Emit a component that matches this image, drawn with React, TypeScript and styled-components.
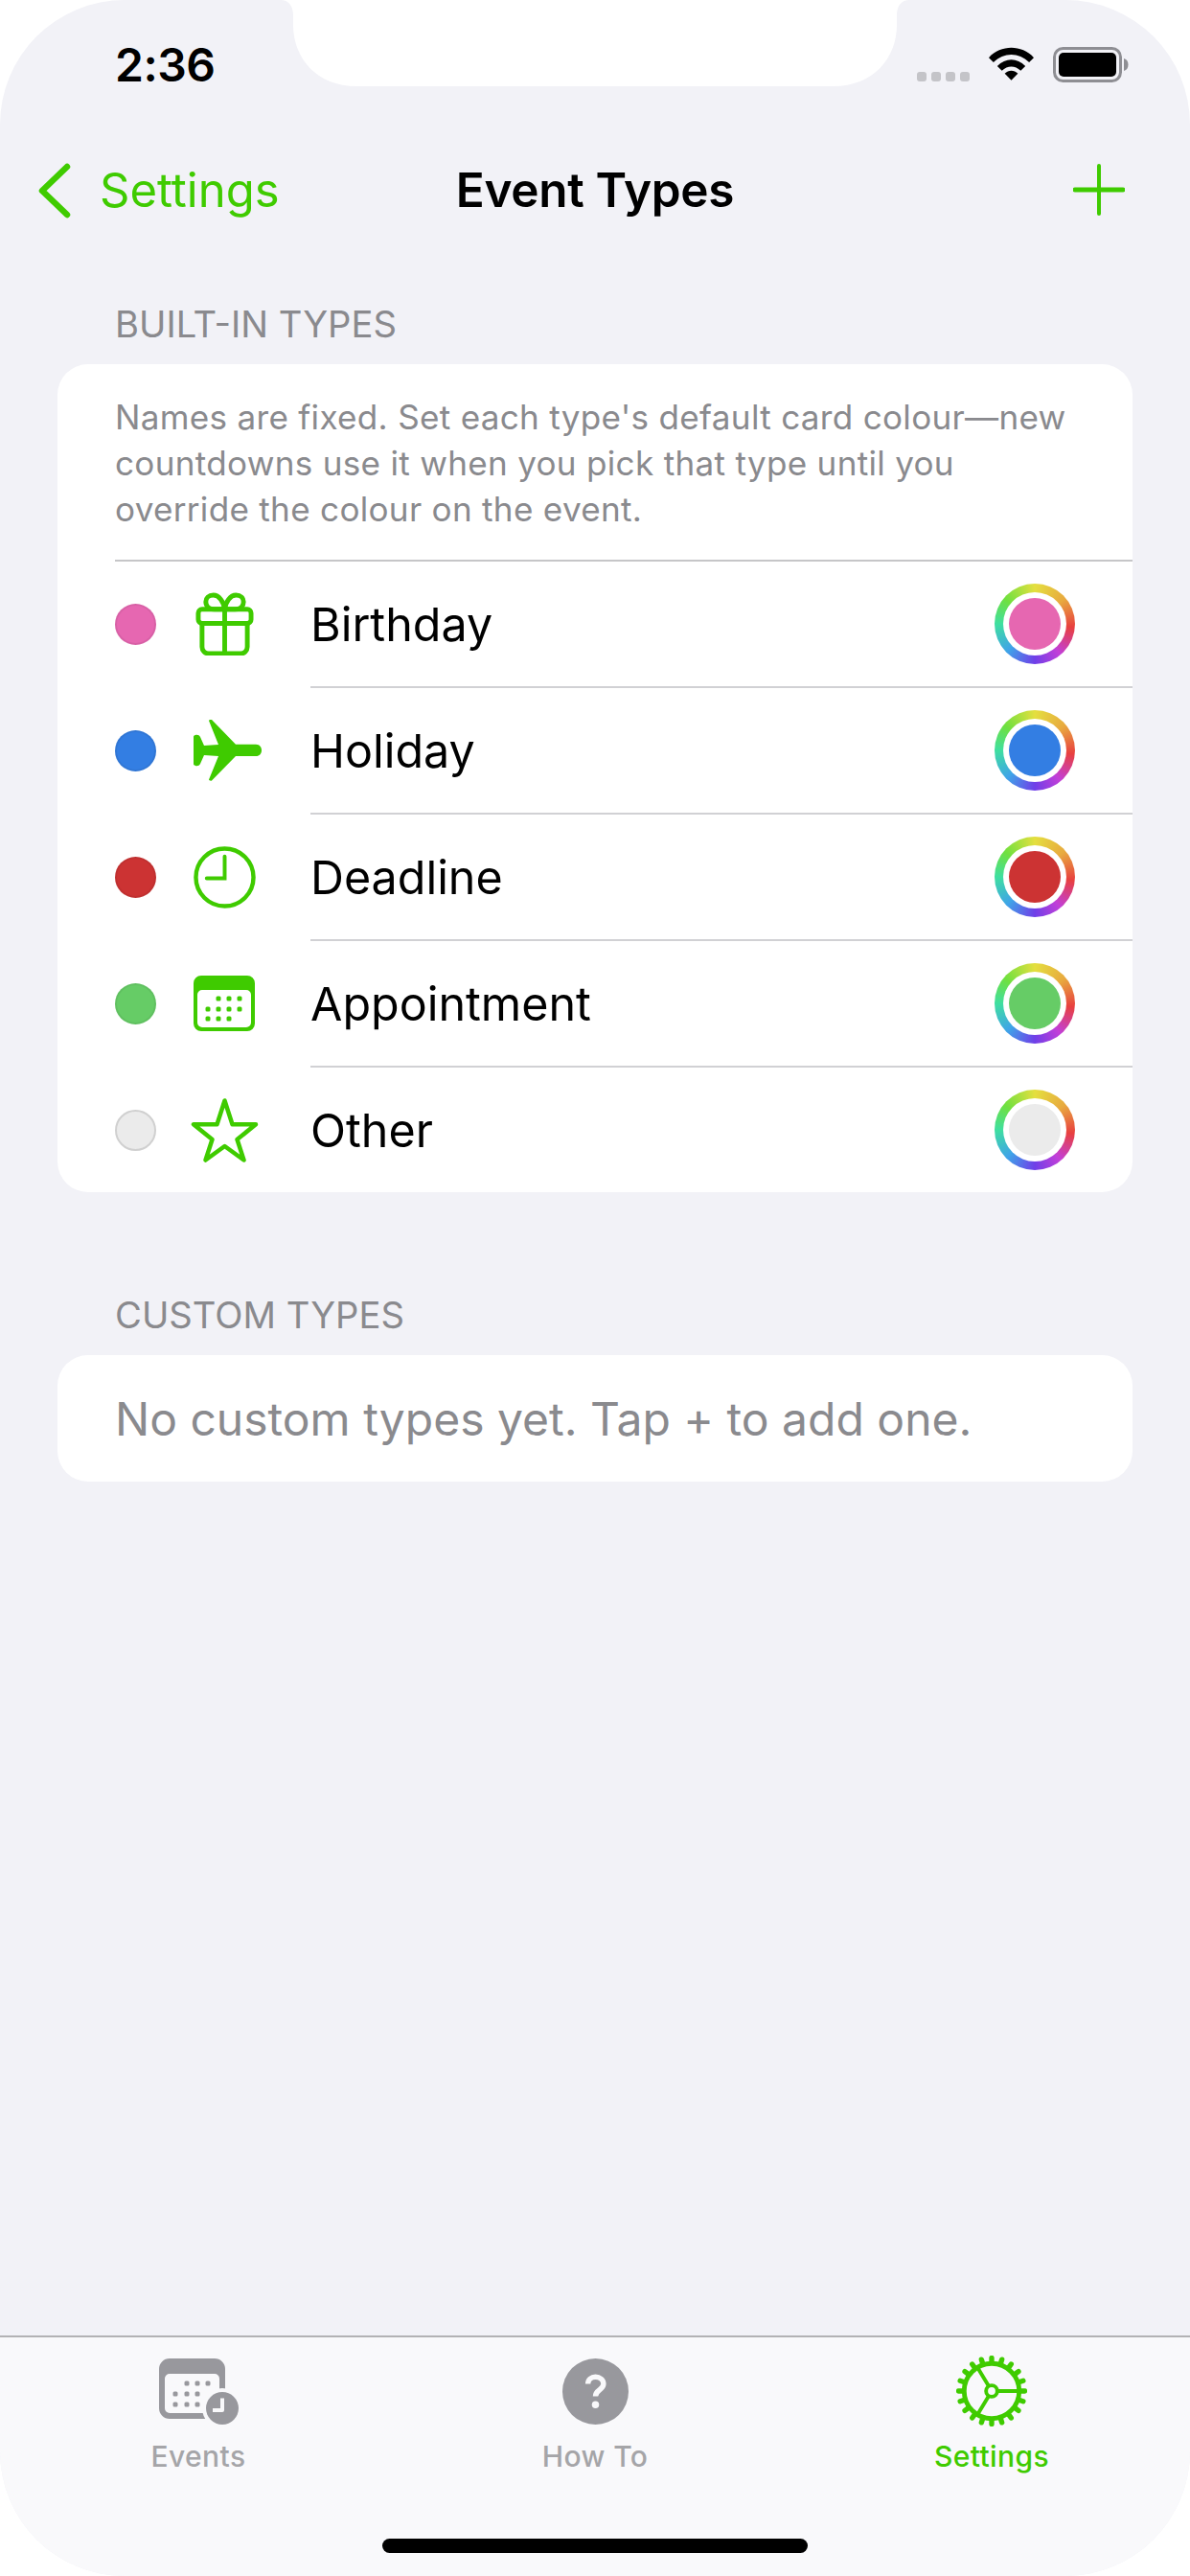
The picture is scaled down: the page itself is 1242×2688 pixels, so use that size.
import React from 'react';
import styled, {createGlobalStyle} from 'styled-components';

const GREEN = '#3fcb00';
const TAB_GREY = '#98989d';
const TAB_BG = '#f9f9fb';

const GlobalStyle = createGlobalStyle`
  html, body {
    margin: 0;
    padding: 0;
    background: #fff;
  }
  * {
    box-sizing: border-box;
  }
`;

const Screen = styled.div`
  position: relative;
  width: 1242px;
  height: 2688px;
  display: flex;
  flex-direction: column;
  background: #f2f2f7;
  border-radius: 130px;
  overflow: hidden;
  font-family: Inter, "Liberation Sans", sans-serif;
`;
const Notch = styled.svg`
  position: absolute;
  top: 0;
  left: 293px;
`;
const StatusBar = styled.div`
  height: 132px;
  padding: 36px 64px 0 120px;
  display: flex;
  justify-content: space-between;
`;
const Time = styled.div`
  font-size: 48px;
  font-weight: 600;
  line-height: 64px;
  letter-spacing: -0.5px;
  color: #000;
`;
const StatusIcons = styled.div`
  display: flex;
  align-items: flex-start;
  padding-top: 13px;
  gap: 20px;
`;
const SignalDots = styled.svg`
  margin-top: 26px;
`;
const NavBar = styled.div`
  position: relative;
  height: 132px;
  display: flex;
  align-items: center;
  justify-content: center;
`;
const BackLink = styled.div`
  position: absolute;
  left: 39px;
  top: 37px;
  display: flex;
  align-items: center;
  gap: 29px;
  color: ${GREEN};
  font-size: 49px;
`;
const AddButton = styled.svg`
  position: absolute;
  right: 68px;
  top: 39px;
`;
const Title = styled.div`
  font-size: 49.5px;
  font-weight: 600;
  color: #000;
  letter-spacing: -0.3px;
`;
const Content = styled.div`
  flex: 1;
  padding: 52px 60px 0;
`;
const SectionLabel = styled.div`
  padding-left: 60px;
  font-size: 38.2px;
  line-height: 44px;
  color: #8a8a8e;
  margin-bottom: 20px;
`;
const Card = styled.div`
  background: #fff;
  border-radius: 32px;
  overflow: hidden;
  margin-bottom: 106px;
`;
const Note = styled.div`
  margin-left: 60px;
  padding: 31px 0 29px;
  font-size: 35.1px;
  line-height: 48px;
  color: #8a8a8e;
  letter-spacing: 0.3px;
  border-bottom: 2px solid #c6c6c8;
`;
const Row = styled.div`
  height: 130px;
  display: flex;
  align-items: center;
  padding: 0 60px;
`;
const RowDivider = styled.div`
  height: 2px;
  margin-left: 264px;
  background: #d1d1d4;
`;
const Dot = styled.div<{$color: string; $light?: boolean}>`
  width: 43px;
  height: 43px;
  border-radius: 50%;
  background: ${props => props.$color};
  border: 2px solid ${props => props.$light ? '#d0d0d0' : 'rgba(0, 0, 0, 0.06)'};
  flex-shrink: 0;
`;
const IconSlot = styled.div`
  width: 161px;
  padding-right: 19px;
  display: flex;
  justify-content: center;
  flex-shrink: 0;
`;
const PlaneSvg = styled.svg`
  margin-left: 7px;
`;
const RowLabel = styled.div`
  flex: 1;
  font-size: 48.4px;
  color: #000;
`;
const Swatch = styled.div`
  width: 84px;
  height: 84px;
  border-radius: 50%;
  background: conic-gradient(#e4df3f 0deg, #e8a93f 50deg, #e8403f 95deg, #c23fd8 140deg, #6f3fe8 180deg, #3fa4e8 225deg, #3fdfa0 270deg, #6fe03f 310deg, #b4e03f 340deg, #e4df3f 360deg);
  display: flex;
  align-items: center;
  justify-content: center;
`;
const SwatchGap = styled.div`
  width: 66px;
  height: 66px;
  border-radius: 50%;
  background: #fff;
  display: flex;
  align-items: center;
  justify-content: center;
`;
const SwatchFill = styled.div<{$color: string}>`
  width: 54px;
  height: 54px;
  border-radius: 50%;
  background: ${props => props.$color};
`;
const EmptyRow = styled.div`
  height: 132px;
  padding-left: 60px;
  display: flex;
  align-items: center;
  font-size: 48px;
  color: #8a8a8e;
`;
const TabBar = styled.div`
  height: 251px;
  background: ${TAB_BG};
  border-top: 2px solid #b2b2b4;
  display: flex;
  justify-content: space-between;
  padding-top: 14px;
  position: relative;
`;
const Tab = styled.div`
  width: 414px;
  display: flex;
  flex-direction: column;
  align-items: center;
`;
const TabIcon = styled.div`
  height: 84px;
  display: flex;
  align-items: center;
  justify-content: center;
`;
const TabLabel = styled.div<{$active?: boolean}>`
  margin-top: 8px;
  font-size: 30px;
  font-weight: 500;
  line-height: 36px;
  letter-spacing: 0.4px;
  color: ${props => props.$active ? GREEN : '#a5a5a8'};
`;
const HomeIndicator = styled.div`
  position: absolute;
  left: 399px;
  bottom: 24px;
  width: 444px;
  height: 15px;
  border-radius: 8px;
  background: #000;
`;

const GiftIcon = () => (
	<svg width="61" height="66" viewBox="0 0 62 67" fill="none" stroke={GREEN} strokeWidth="5" strokeLinejoin="round">
		<rect x="3" y="18" width="56" height="15" rx="4"/>
		<path d="M7 33v25a7 7 0 0 0 7 7h34a7 7 0 0 0 7-7V33"/>
		<path d="M31 18v47"/>
		<path d="M31 18c-1-8-6-15-12-15-5 0-8 3-8 7 0 5 4 8 9 8h11z"/>
		<path d="M31 18c1-8 6-15 12-15 5 0 8 3 8 7 0 5-4 8-9 8H31z"/>
	</svg>
);

const PlaneIcon = () => (
	<PlaneSvg width="71" height="64" viewBox="0 0 71 64" fill={GREEN}>
		<path d="M16 1c0-1 2-1.500 3-1l25 25.700h21c4 0 6 3 6 6.300s-2 6-6 6H44L19 63.500c-1 .5-3 0-3-1L26 38l-15-1-4 9c-1 2-3 2.500-5 2-1.500-.5-2-1-2-2V18c0-1 .5-2 2-2 2-.5 4 0 5 2l4 9 15-1z"/>
	</PlaneSvg>
);

const ClockIcon = () => (
	<svg width="65" height="65" viewBox="0 0 66 66" fill="none" stroke={GREEN} strokeWidth="4.500">
		<circle cx="33" cy="33" r="30.500"/>
		<path d="M33 11v23H14" strokeLinecap="round" strokeWidth="4"/>
	</svg>
);

const calendarDots = [[26, 24], [37, 24], [48, 24], [15, 35], [26, 35], [37, 35], [48, 35], [15, 45], [26, 45], [37, 45]];

const CalendarIcon = () => (
	<svg width="64" height="58" viewBox="0 0 64 58">
		<path fillRule="evenodd" fill={GREEN} d="M8 0h48a8 8 0 0 1 8 8v42a8 8 0 0 1-8 8H8a8 8 0 0 1-8-8V8a8 8 0 0 1 8-8zM9 15a5 5 0 0 0-5 5v29a5 5 0 0 0 5 5h46a5 5 0 0 0 5-5V20a5 5 0 0 0-5-5z"/>
		<g fill={GREEN}>
			{calendarDots.map(([x, y]) => (
				<rect key={`${x}-${y}`} x={x - 2.5} y={y - 2.5} width="5" height="5" rx="1.5"/>
			))}
		</g>
	</svg>
);

const StarIcon = () => (
	<svg width="71" height="67" viewBox="0 0 71 67" fill="none" stroke={GREEN} strokeWidth="4.500" strokeLinejoin="round">
		<path d="M35.500 2.500l8 24.700H68L48.500 43l7 21.500L35.500 50l-20 14.500 7-21.500L3 27.200h24.500z"/>
	</svg>
);

const eventsDots = [[29, 26], [40, 26], [51, 26], [17, 37], [29, 37], [40, 37], [17, 48], [29, 48], [40, 48]];

const EventsTabIcon = () => (
	<svg width="83" height="69" viewBox="0 0 83 69">
		<path fill={TAB_GREY} fillRule="evenodd" d="M11 0h47a11 11 0 0 1 11 11v41a11 11 0 0 1-11 11H11A11 11 0 0 1 0 52V11A11 11 0 0 1 11 0zM11 16a5 5 0 0 0-5 5v31a5 5 0 0 0 5 5h47a5 5 0 0 0 5-5V21a5 5 0 0 0-5-5z"/>
		<g fill={TAB_GREY}>
			{eventsDots.map(([x, y]) => (
				<rect key={`${x}-${y}`} x={x - 2.5} y={y - 2.5} width="5" height="5" rx="1.5"/>
			))}
		</g>
		<circle cx="66" cy="52" r="21" fill={TAB_BG}/>
		<circle cx="66" cy="52" r="17" fill={TAB_GREY}/>
		<path d="M66 41.500V54h-10" fill="none" stroke={TAB_BG} strokeWidth="4" strokeLinejoin="round"/>
	</svg>
);

const HelpTabIcon = () => (
	<svg width="69" height="69" viewBox="0 0 70 70">
		<circle cx="35" cy="35" r="35" fill={TAB_GREY}/>
		<path d="M27 27c0-4.500 3.500-7.500 8-7.500s8.500 3 8.500 7.500c0 6.500-8.500 6-8.500 13" fill="none" stroke={TAB_BG} strokeWidth="5.500"/>
		<circle cx="35" cy="49" r="3.800" fill={TAB_BG}/>
	</svg>
);

const gearTeeth = Array.from({length: 20}, (_, i) => i * 18);

const SettingsTabIcon = () => (
	<svg width="74" height="74" viewBox="0 0 76 76" fill="none" stroke={GREEN}>
		<g strokeWidth="5.500" strokeLinecap="round">
			{gearTeeth.map(deg => (
				<path key={deg} d="M38 2.500v4" transform={`rotate(${deg} 38 38)`}/>
			))}
		</g>
		<circle cx="38" cy="38" r="29.500" strokeWidth="5"/>
		<circle cx="38" cy="38" r="6" strokeWidth="4"/>
		<path d="M45 38h23M34.500 32L23 13M34.500 44L23 63" strokeWidth="4"/>
	</svg>
);

type EventType = {
	name: string;
	color: string;
	light?: boolean;
	icon: React.ReactNode;
};

const builtInTypes: EventType[] = [
	{name: 'Birthday', color: '#e667b1', icon: <GiftIcon/>},
	{name: 'Holiday', color: '#337ee3', icon: <PlaneIcon/>},
	{name: 'Deadline', color: '#cc3333', icon: <ClockIcon/>},
	{name: 'Appointment', color: '#66cc66', icon: <CalendarIcon/>},
	{name: 'Other', color: '#ebebeb', light: true, icon: <StarIcon/>},
];

const App: React.FC = () => (
	<>
		<GlobalStyle/>
		<Screen>
			<Notch width="656" height="90" viewBox="0 0 656 90">
				<path fill="#fff" d="M0 0h656c-8 0-13 6-13 16v10c0 35-25 64-66 64H79C38 90 13 61 13 26V16C13 6 8 0 0 0z"/>
			</Notch>
			<StatusBar>
				<Time>2:36</Time>
				<StatusIcons>
					<SignalDots width="55" height="10" viewBox="0 0 55 10" fill="#c4c4c8">
						<rect x="0" width="10" height="10" rx="3"/>
						<rect x="15" width="10" height="10" rx="3"/>
						<rect x="30" width="10" height="10" rx="3"/>
						<rect x="45" width="10" height="10" rx="3"/>
					</SignalDots>
					<svg width="47" height="36" viewBox="0 0 48 36">
						<path d="M0 11C13-3 35-3 48 11l-5 5C32 5 16 5 5 16z"/>
						<path d="M9 20c9-9 21-9 30 0l-5 5c-6-6-14-6-20 0z"/>
						<path d="M17 28c4-4 10-4 14 0l-7 7z"/>
					</svg>
					<svg width="79" height="37" viewBox="0 0 79 37">
						<rect x="1.500" y="1.500" width="69" height="34" rx="9" fill="none" stroke="#8e8e93" strokeWidth="3"/>
						<rect x="6" y="6" width="60" height="25" rx="5"/>
						<path d="M74 12c3 1 4.500 3 4.500 6.500s-1.500 5.500-4.500 6.500z" fill="#8e8e93"/>
					</svg>
				</StatusIcons>
			</StatusBar>
			<NavBar>
				<BackLink>
					<svg width="36" height="58" viewBox="0 0 36 58" fill="none" stroke={GREEN} strokeWidth="6.500" strokeLinecap="round" strokeLinejoin="round">
						<path d="M31 4L5 29l26 25"/>
					</svg>
					Settings
				</BackLink>
				<Title>Event Types</Title>
				<AddButton width="54" height="54" viewBox="0 0 54 54" stroke={GREEN} strokeLinecap="round">
					<path d="M27 2v50" strokeWidth="4"/>
					<path d="M2 27h50" strokeWidth="5"/>
				</AddButton>
			</NavBar>
			<Content>
				<SectionLabel>BUILT-IN TYPES</SectionLabel>
				<Card>
					<Note>
						Names are fixed. Set each type's default card colour—new<br/>
						countdowns use it when you pick that type until you<br/>
						override the colour on the event.
					</Note>
					{builtInTypes.map((type, i) => (
						<React.Fragment key={type.name}>
							{i > 0 && <RowDivider/>}
							<Row>
								<Dot $color={type.color} $light={type.light}/>
								<IconSlot>{type.icon}</IconSlot>
								<RowLabel>{type.name}</RowLabel>
								<Swatch>
									<SwatchGap>
										<SwatchFill $color={type.color}/>
									</SwatchGap>
								</Swatch>
							</Row>
						</React.Fragment>
					))}
				</Card>
				<SectionLabel>CUSTOM TYPES</SectionLabel>
				<Card>
					<EmptyRow>No custom types yet. Tap + to add one.</EmptyRow>
				</Card>
			</Content>
			<TabBar>
				<Tab>
					<TabIcon><EventsTabIcon/></TabIcon>
					<TabLabel>Events</TabLabel>
				</Tab>
				<Tab>
					<TabIcon><HelpTabIcon/></TabIcon>
					<TabLabel>How To</TabLabel>
				</Tab>
				<Tab>
					<TabIcon><SettingsTabIcon/></TabIcon>
					<TabLabel $active>Settings</TabLabel>
				</Tab>
				<HomeIndicator/>
			</TabBar>
		</Screen>
	</>
);

export default App;
